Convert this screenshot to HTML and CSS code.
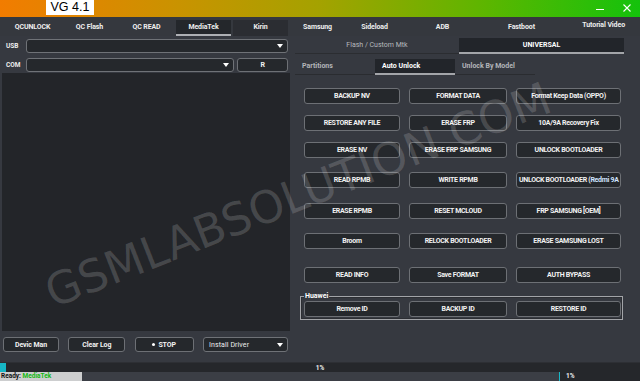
FILE: index.html
```html
<!DOCTYPE html>
<html lang="en">
<head>
    <meta charset="UTF-8">
    <meta name="viewport" content="width=device-width, initial-scale=1.0">
    <title>VG 4.1</title>
    <link rel="stylesheet" href="styles.css">
</head>
<body>

    <div class="titlebar">
        <div class="app-title">VG 4.1</div>
        <div class="win-btns">
            <span class="win-min"></span>
            <svg class="win-close" width="8" height="8" viewBox="0 0 8 8">
                <path d="M0.5 0.5 L7.5 7.5 M7.5 0.5 L0.5 7.5" stroke="#ffffff" stroke-width="1.1" fill="none"/>
            </svg>
        </div>
    </div>

    <nav class="main-tabs">
        <span class="main-tab">QCUNLOCK</span>
        <span class="main-tab">QC Flash</span>
        <span class="main-tab">QC READ</span>
        <span class="main-tab active">MediaTek</span>
        <span class="main-tab dim">Kirin</span>
        <span class="main-tab">Samsung</span>
        <span class="main-tab">Sideload</span>
        <span class="main-tab wide">ADB</span>
        <span class="main-tab wide">Fastboot</span>
        <span class="main-tab video">Tutorial Video</span>
    </nav>

    <div class="main">
        <section class="left">
            <div class="port-row first">
                <label>USB</label>
                <div class="select usb"><span class="caret"></span></div>
            </div>
            <div class="port-row">
                <label>COM</label>
                <div class="select com"><span class="caret"></span></div>
                <button class="btn r-btn">R</button>
            </div>
            <div class="log"></div>
            <div class="left-actions">
                <button class="btn act-dev">Devic Man</button>
                <button class="btn act-clear">Clear Log</button>
                <button class="btn act-stop"><span class="dot"></span>STOP</button>
                <div class="select driver">Install Driver<span class="caret"></span></div>
            </div>
        </section>

        <section class="right">
            <div class="mode-tabs">
                <span class="mode-tab">Flash / Custom Mtk</span>
                <span class="mode-tab active">UNIVERSAL</span>
            </div>
            <div class="sub-tabs">
                <span class="sub-tab">Partitions</span>
                <span class="sub-tab active">Auto Unlock</span>
                <span class="sub-tab">Unlock By Model</span>
            </div>

            <div class="btn-grid">
                <button class="btn">BACKUP NV</button>
                <button class="btn">FORMAT DATA</button>
                <button class="btn">Format Keep Data (OPPO)</button>

                <button class="btn">RESTORE ANY FILE</button>
                <button class="btn">ERASE FRP</button>
                <button class="btn">10A/9A Recovery Fix</button>

                <button class="btn">ERASE NV</button>
                <button class="btn">ERASE FRP SAMSUNG</button>
                <button class="btn">UNLOCK BOOTLOADER</button>

                <button class="btn">READ RPMB</button>
                <button class="btn">WRITE RPMB</button>
                <button class="btn">UNLOCK BOOTLOADER (<span class="blue">Redmi 9A</span></button>

                <button class="btn">ERASE RPMB</button>
                <button class="btn">RESET MCLOUD</button>
                <button class="btn">FRP SAMSUNG [OEM]</button>

                <button class="btn">Broom</button>
                <button class="btn">RELOCK BOOTLOADER</button>
                <button class="btn">ERASE SAMSUNG LOST</button>

                <button class="btn">READ INFO</button>
                <button class="btn">Save FORMAT</button>
                <button class="btn">AUTH BYPASS</button>
            </div>

            <div class="group">
                <span class="legend">Huawei</span>
                <div class="group-row">
                    <button class="btn">Remove ID</button>
                    <button class="btn">BACKUP ID</button>
                    <button class="btn">RESTORE ID</button>
                </div>
            </div>
        </section>
    </div>

    <div class="progress">1%</div>
    <div class="status">
        <span class="ready">Ready: <span class="ready-name">MediaTek</span></span>
        <div class="mini-progress">1%</div>
    </div>

    <div class="watermark">GSMLABSOLUTION.COM</div>

</body>
</html>
```

FILE: styles.css
```css
* {
    box-sizing: border-box;
}

body {
    margin: 0;
    width: 640px;
    height: 381px;
    overflow: hidden;
    position: relative;
    background-color: #363940;
    font-family: Roboto, "Noto Sans", sans-serif;
    font-size: 7px;
    font-weight: 700;
    color: #eeeeee;
}

button {
    font: inherit;
    color: inherit;
}

/* Title bar */
.titlebar {
    height: 17px;
    display: flex;
    align-items: flex-start;
    background: linear-gradient(90deg, #f27c00 0%, #c99300 28%, #a4a200 50%, #5cb600 76%, #14c20c 100%);
}
.app-title {
    margin-left: 46px;
    width: 48px;
    height: 15px;
    background: #ffffff;
    color: #000000;
    font: 400 12.5px "Liberation Sans", Arial, sans-serif;
    line-height: 15px;
    text-align: center;
}
.win-btns {
    margin-left: auto;
    height: 17px;
    display: flex;
    align-items: center;
    gap: 19px;
    padding-right: 9px;
}
.win-min {
    width: 8px;
    height: 1px;
    background: #ffffff;
    margin-top: 2px;
}
.win-close {
    display: block;
    margin-top: -1px;
}

/* Top tabs */
.main-tabs {
    height: 19px;
    display: flex;
    padding: 3px 0 0 4px;
    background: #35383e;
    letter-spacing: -0.1px;
}
.main-tab {
    width: 55px;
    height: 16px;
    margin: 0 1px;
    line-height: 15px;
    text-align: center;
    white-space: nowrap;
}
.main-tab.active {
    background: #24272b;
    border-bottom: 2px solid #aeb0b4;
}
.main-tab.dim {
    background: #2b2d32;
}
.main-tab.wide {
    width: 77px;
}
.main-tab.video {
    width: auto;
    margin-left: auto;
    margin-right: 15px;
    line-height: 8px;
    height: auto;
    padding-top: 1px;
}

/* Main area */
.main {
    height: 326px;
    display: flex;
}

.left {
    width: 295px;
    padding: 0 5px 0 2px;
    display: flex;
    flex-direction: column;
}
.port-row {
    height: 14px;
    margin-top: 5px;
    padding-right: 2px;
    display: flex;
    align-items: center;
    gap: 3px;
}
.port-row.first {
    margin-top: 3px;
}
.port-row label {
    width: 21px;
    padding-left: 4px;
    font-size: 6.5px;
}
.select {
    height: 14px;
    background: #25282c;
    border: 1px solid #6f7277;
    border-radius: 3px;
    display: flex;
    align-items: center;
    justify-content: flex-end;
    padding-right: 4px;
}
.select.usb {
    width: 262px;
}
.select.com {
    width: 208px;
}
.caret {
    width: 0;
    height: 0;
    border-left: 3px solid transparent;
    border-right: 3px solid transparent;
    border-top: 4px solid #ffffff;
}
.btn {
    height: 16px;
    padding: 0 2px;
    background: #25282c;
    border: 1px solid #6d7075;
    border-radius: 3px;
    color: #f2f2f2;
    text-align: center;
    white-space: nowrap;
    overflow: hidden;
    letter-spacing: -0.3px;
    cursor: pointer;
}
.r-btn {
    width: 51px;
    height: 14px;
}
.log {
    height: 258px;
    margin-top: 1px;
    background: #232529;
}
.left-actions {
    margin-top: 6px;
    padding: 0 2px 0 1px;
    display: flex;
    justify-content: space-between;
}
.left-actions .btn {
    height: 15px;
    letter-spacing: -0.1px;
}
.act-dev {
    width: 56px;
}
.act-clear {
    width: 57px;
}
.act-stop {
    width: 59px;
}
.dot {
    display: inline-block;
    width: 3px;
    height: 3px;
    border-radius: 50%;
    background: #ffffff;
    margin-right: 3px;
    vertical-align: 1px;
}
.select.driver {
    width: 85px;
    height: 15px;
    justify-content: space-between;
    padding-left: 5px;
    font-weight: 400;
    letter-spacing: 0.1px;
}

/* Right panel */
.right {
    flex: 1;
}
.mode-tabs {
    margin-top: 2px;
    height: 16px;
    display: flex;
}
.mode-tab {
    height: 16px;
    width: 164px;
    line-height: 15px;
    text-align: center;
    font-weight: 400;
    color: #b7b9bd;
    border-bottom: 1px solid #2b2d31;
}
.mode-tab.active {
    width: 165px;
    background: #22252a;
    color: #ffffff;
    font-weight: 700;
    border-bottom: 2px solid #a3a5a9;
}
.sub-tabs {
    margin-top: 5px;
    width: 240px;
    height: 16px;
    display: flex;
    border-bottom: 1px solid #2a2c30;
}
.sub-tab {
    width: 80px;
    height: 16px;
    padding-left: 7px;
    line-height: 15px;
    color: #b3b5b9;
}
.sub-tab.active {
    background: #22252a;
    color: #ffffff;
    border-bottom: 2px solid #a3a5a9;
}

.btn-grid {
    margin: 13px 0 0 9px;
    display: grid;
    grid-template-columns: 96px 98px 105px;
    grid-template-rows: 27px 27px 30px 31px 30px 34px 16px;
    column-gap: 9px;
    align-items: start;
}
.blue {
    color: #cfe4ff;
}

.group {
    position: relative;
    margin: 13px 0 0 5px;
    width: 323px;
    height: 24px;
    padding: 4px 0 0 3px;
    border: 1px solid #a2a4a8;
    box-shadow: inset 0 0 0 1px #2c2e33;
}
.legend {
    position: absolute;
    top: -5px;
    left: 3px;
    padding: 0 1px;
    background: #363940;
    line-height: 8px;
    color: #ffffff;
}
.group-row {
    display: grid;
    grid-template-columns: 96px 98px 105px;
    column-gap: 9px;
}

/* Progress and status */
.progress {
    height: 10px;
    line-height: 10px;
    text-align: center;
    background: linear-gradient(90deg, #17b7c6 6px, #25272b 6px);
    border-top: 1px solid #2d2f34;
    font-size: 6.5px;
}
.status {
    height: 9px;
    display: flex;
    background: #3b3e45;
    line-height: 9px;
    font-size: 6.5px;
}
.ready {
    width: 82px;
    padding-left: 1px;
    background: #cdcecf;
    color: #111111;
}
.ready-name {
    color: #12b812;
}
.mini-progress {
    margin-left: auto;
    width: 81px;
    padding-left: 6px;
    background: #25272b;
    border-left: 1px solid #17b7c6;
}

/* Watermark */
.watermark {
    position: absolute;
    left: 298px;
    top: 195px;
    transform: translate(-50%, -50%) rotate(-21.5deg);
    font: 400 45px "DejaVu Sans", sans-serif;
    color: rgba(255, 255, 255, 0.16);
    white-space: nowrap;
    pointer-events: none;
}
```
